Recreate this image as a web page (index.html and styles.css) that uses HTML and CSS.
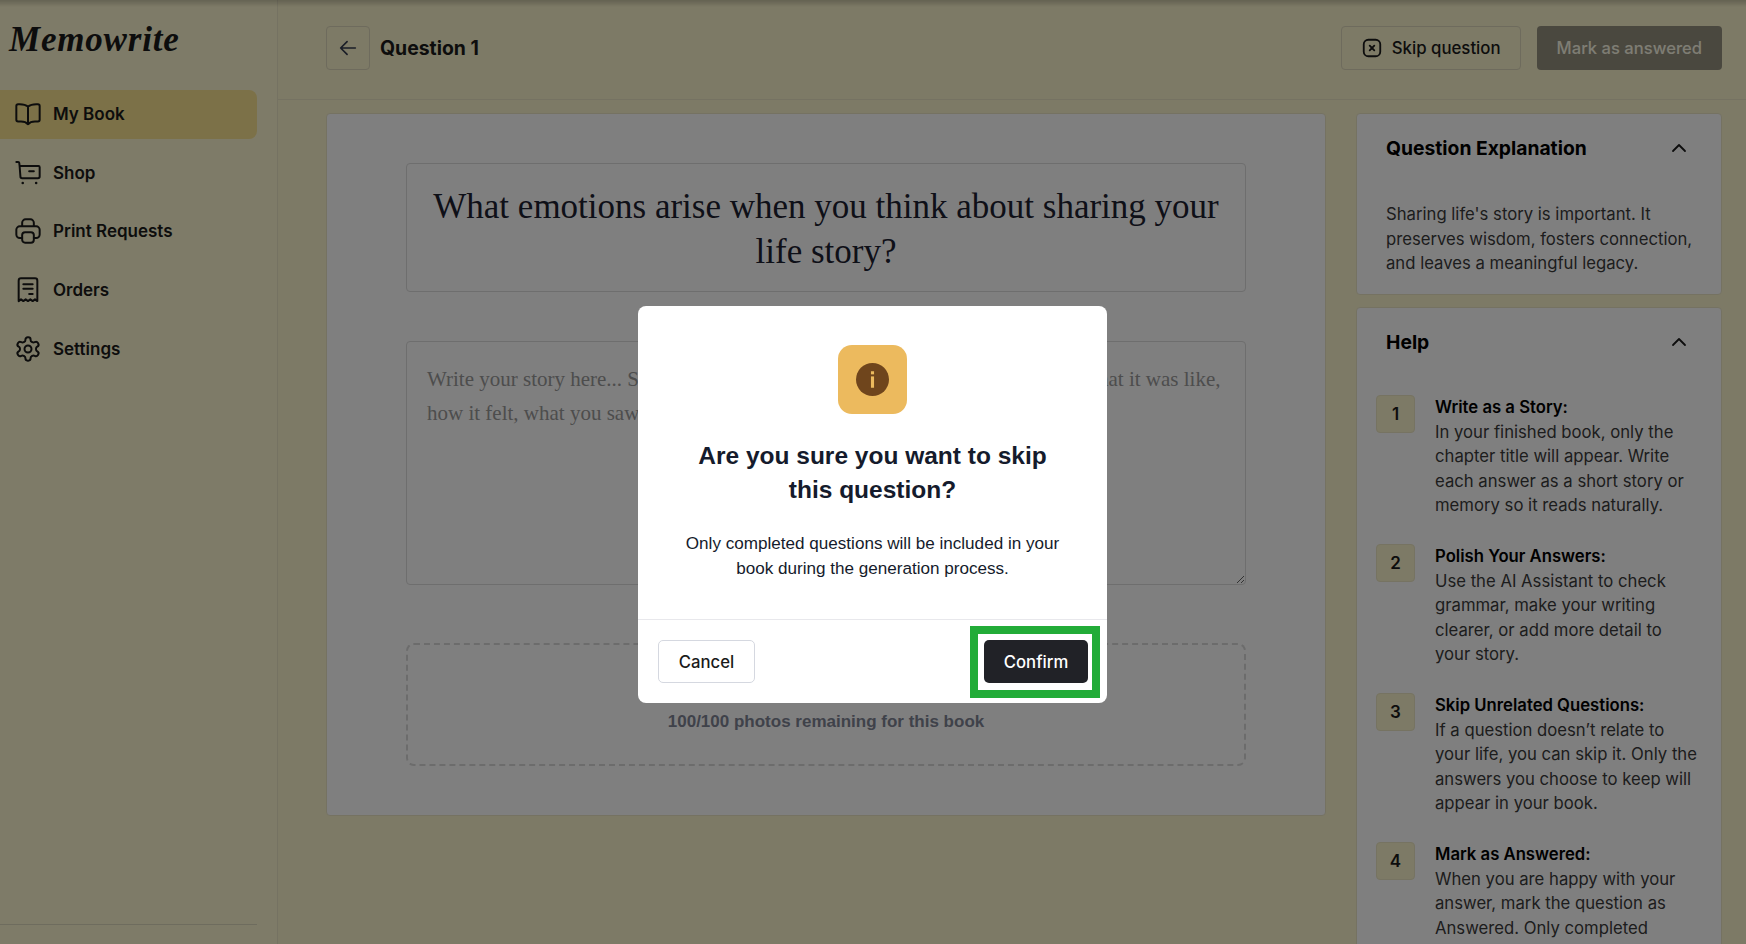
FILE: index.html
```html
<!DOCTYPE html>
<html lang="en">
<head>
	<meta charset="utf-8" />
	<title>Memowrite</title>
	<link rel="stylesheet" href="styles.css">
</head>
<body>
<div class="app">
	<div class="sidebar">
		<div class="logo">Memowrite</div>
		<a class="nav-item active">
			<svg class="nav-icon" viewBox="0 0 24 24"><path d="M12 5.600C10.400 4.300 8.200 3.600 5 3.600H3.500A1.500 1.500 0 0 0 2 5.100V17a1.500 1.500 0 0 0 1.500 1.500H6c2.600 0 4.600.7 6 2.300 1.400-1.600 3.400-2.300 6-2.300h2.500A1.500 1.500 0 0 0 22 17V5.100a1.500 1.500 0 0 0-1.500-1.500H19c-3.200 0-5.400.7-7 2zM12 5.600v15.200"/></svg>
			My Book
		</a>
		<a class="nav-item">
			<svg class="nav-icon" viewBox="0 0 24 24"><path d="M2 2.500h1.500a1 1 0 0 1 1 .9l.3 2.600M4.800 6h16.200a1 1 0 0 1 1 1v8a1.500 1.500 0 0 1-1.500 1.500H7a1.500 1.500 0 0 1-1.500-1.500zM13 10.500h4"/><circle class="dot" cx="7.500" cy="20.500" r="1.100"/><circle class="dot" cx="19" cy="20.500" r="1.100"/></svg>
			Shop
		</a>
		<a class="nav-item">
			<svg class="nav-icon" viewBox="0 0 24 24"><path d="M7 8V5a3 3 0 0 1 3-3h4a3 3 0 0 1 3 3v3M7 18H5a3 3 0 0 1-3-3v-4a3 3 0 0 1 3-3h14a3 3 0 0 1 3 3v4a3 3 0 0 1-3 3h-2"/><rect x="7" y="13" width="10" height="9" rx="2.500"/></svg>
			Print Requests
		</a>
		<a class="nav-item">
			<svg class="nav-icon" viewBox="0 0 24 24"><path d="M4 21.500V4a2 2 0 0 1 2-2h12a2 2 0 0 1 2 2v17.500l-2-1.500-2 1.500-2-1.500-2 1.500-2-1.500-2 1.500-2-1.500zM8 7h8M8 11h8M13 15.500h3"/></svg>
			Orders
		</a>
		<a class="nav-item">
			<svg class="nav-icon" viewBox="0 0 24 24"><path d="M12.220 2h-.44a2 2 0 0 0-2 2v.18a2 2 0 0 1-1 1.730l-.43.25a2 2 0 0 1-2 0l-.15-.08a2 2 0 0 0-2.730.73l-.22.38a2 2 0 0 0 .73 2.730l.15.1a2 2 0 0 1 1 1.720v.51a2 2 0 0 1-1 1.740l-.15.09a2 2 0 0 0-.73 2.730l.22.38a2 2 0 0 0 2.730.73l.15-.08a2 2 0 0 1 2 0l.43.25a2 2 0 0 1 1 1.730V20a2 2 0 0 0 2 2h.44a2 2 0 0 0 2-2v-.18a2 2 0 0 1 1-1.730l.43-.25a2 2 0 0 1 2 0l.15.08a2 2 0 0 0 2.730-.73l.22-.39a2 2 0 0 0-.73-2.730l-.15-.08a2 2 0 0 1-1-1.740v-.5a2 2 0 0 1 1-1.740l.15-.09a2 2 0 0 0 .73-2.730l-.22-.38a2 2 0 0 0-2.730-.73l-.15.08a2 2 0 0 1-2 0l-.43-.25a2 2 0 0 1-1-1.730V4a2 2 0 0 0-2-2z"/><circle cx="12" cy="12" r="3"/></svg>
			Settings
		</a>
		<div class="sidebar-foot"></div>
	</div>

	<div class="main">
		<div class="topbar">
			<button class="btn-back">
				<svg class="back-icon" viewBox="0 0 24 24"><path d="M20 12H4M11 5l-7 7 7 7"/></svg>
			</button>
			<h1 class="page-title">Question 1</h1>
			<button class="btn-skip">
				<svg class="skip-icon" viewBox="0 0 24 24"><rect x="3" y="3" width="18" height="18" rx="5"/><path d="M9.500 9.500l5 5M14.500 9.500l-5 5"/></svg>
				Skip question
			</button>
			<button class="btn-mark">Mark as answered</button>
		</div>

		<div class="content">
			<div class="editor">
				<div class="question-box">What emotions arise when you think about sharing your life story?</div>
				<textarea class="story" placeholder="Write your story here... Share a vivid moment from your life and tell us again what it was like,&#10;how it felt, what you saw, who was with you and why it matters."></textarea>
				<div class="dropzone">
					<span class="photos-left">100/100 photos remaining for this book</span>
				</div>
			</div>

			<div class="aside">
				<div class="panel panel-explain">
					<div class="panel-head">
						<h2>Question Explanation</h2>
						<svg class="chevron" viewBox="0 0 16 10"><path d="M2 8l6-6 6 6"/></svg>
					</div>
					<p class="panel-text">Sharing life's story is important. It preserves wisdom, fosters connection, and leaves a meaningful legacy.</p>
				</div>
				<div class="panel panel-help">
					<div class="panel-head">
						<h2>Help</h2>
						<svg class="chevron" viewBox="0 0 16 10"><path d="M2 8l6-6 6 6"/></svg>
					</div>
					<div class="help-item">
						<div class="help-num">1</div>
						<div class="help-text"><b>Write as a Story:</b><br />In your finished book, only the chapter title will appear. Write each answer as a short story or memory so it reads naturally.</div>
					</div>
					<div class="help-item">
						<div class="help-num">2</div>
						<div class="help-text"><b>Polish Your Answers:</b><br />Use the AI Assistant to check grammar, make your writing clearer, or add more detail to your story.</div>
					</div>
					<div class="help-item">
						<div class="help-num">3</div>
						<div class="help-text"><b>Skip Unrelated Questions:</b><br />If a question doesn’t relate to your life, you can skip it. Only the answers you choose to keep will appear in your book.</div>
					</div>
					<div class="help-item">
						<div class="help-num">4</div>
						<div class="help-text"><b>Mark as Answered:</b><br />When you are happy with your answer, mark the question as Answered. Only completed</div>
					</div>
				</div>
			</div>
		</div>
	</div>
</div>

<div class="overlay">
	<div class="modal">
		<div class="modal-body">
			<div class="modal-icon">
				<svg viewBox="0 0 32 32"><circle class="info-disc" cx="16" cy="16" r="16"/><rect class="info-mark" x="14.500" y="8" width="3" height="3"/><rect class="info-mark" x="14.500" y="13" width="3" height="11"/></svg>
			</div>
			<h3 class="modal-title">Are you sure you want to skip this question?</h3>
			<p class="modal-text">Only completed questions will be included in your book during the generation process.</p>
		</div>
		<div class="modal-foot">
			<button class="btn-cancel">Cancel</button>
			<div class="highlight"><button class="btn-confirm">Confirm</button></div>
		</div>
	</div>
</div>
</body>
</html>
```

FILE: styles.css
```css
* {
	box-sizing: border-box;
}
html, body {
	height: 100%;
}
body {
	margin: 0;
	overflow: hidden;
	background-color: #faf4cc;
	color: #1a1a1a;
	font-family: Inter, "Liberation Sans", sans-serif;
}
button {
	font-family: inherit;
}
.app {
	display: flex;
	height: 944px;
}

/* sidebar */
.sidebar {
	position: relative;
	flex: 0 0 278px;
	background-color: #fdf7d0;
	border-right: 1px solid #ebe5c5;
}
.logo {
	height: 89.500px;
	padding: 20px 0 0 9px;
	font-family: "Liberation Serif", serif;
	font-style: italic;
	font-weight: bold;
	font-size: 35px;
	letter-spacing: 0.8px;
}
.nav-item {
	display: flex;
	align-items: center;
	gap: 11px;
	width: 257px;
	height: 49px;
	margin-bottom: 9.700px;
	padding-left: 14px;
	border-radius: 0 8px 8px 0;
	font-size: 17px;
	font-weight: 600;
}
.nav-item.active {
	background-color: #f8e290;
}
.nav-icon {
	width: 28px;
	height: 28px;
	fill: none;
	stroke: #1a1a1a;
	stroke-width: 1.700;
	stroke-linecap: round;
	stroke-linejoin: round;
}
.nav-icon .dot {
	fill: #1a1a1a;
	stroke: none;
}
.sidebar-foot {
	position: absolute;
	left: 0;
	bottom: 19px;
	width: 257px;
	border-top: 1px solid #dcd8bc;
}

/* top bar */
.main {
	flex: 1;
	min-width: 0;
}
.topbar {
	display: flex;
	align-items: center;
	height: 100px;
	padding: 0 24px 4px 48px;
	border-bottom: 1px solid #ebe5c5;
}
.btn-back {
	width: 44px;
	height: 44px;
	padding: 10px;
	background: none;
	border: 1px solid #ddd7ba;
	border-radius: 4px;
}
.back-icon {
	display: block;
	fill: none;
	stroke: #333a4d;
	stroke-width: 1.800;
	stroke-linecap: round;
	stroke-linejoin: round;
}
.page-title {
	margin: 0 auto 0 10px;
	font-size: 19.400px;
	font-weight: 650;
}
.btn-skip {
	display: flex;
	align-items: center;
	gap: 9px;
	height: 44px;
	padding: 0 19px;
	background: none;
	border: 1px solid #ddd7ba;
	border-radius: 4px;
	color: #1a1a1a;
	font-size: 16.800px;
	font-weight: 500;
}
.skip-icon {
	width: 22px;
	height: 22px;
	fill: none;
	stroke: #1a1a1a;
	stroke-width: 2;
	stroke-linecap: round;
}
.btn-mark {
	height: 44px;
	margin-left: 16px;
	padding: 0 20px;
	background-color: #95907f;
	border: 0;
	border-radius: 4px;
	color: #fdfbe8;
	font-size: 16.600px;
	font-weight: 500;
}

/* content */
.content {
	display: flex;
	align-items: flex-start;
	gap: 30px;
	padding: 13px 24px 0 48px;
}
.editor {
	flex: 0 0 1000px;
	height: 703px;
	padding: 49px 79px 0;
	background-color: #fff;
	border: 1px solid #ebe5c5;
	border-radius: 4px;
}
.question-box {
	height: 129px;
	padding: 21px 20px 0;
	border: 1px solid #dcdcdc;
	border-radius: 4px;
	font-family: "Liberation Serif", serif;
	font-size: 35px;
	line-height: 44.500px;
	text-align: center;
	color: #1c2130;
}
.story {
	display: block;
	width: 100%;
	height: 244px;
	margin-top: 49px;
	padding: 20px 20px;
	background: none;
	border: 1px solid #dcdcdc;
	border-radius: 4px;
	font-family: "Liberation Serif", serif;
	font-size: 21px;
	line-height: 34px;
	white-space: pre;
}
.story::placeholder {
	color: #9a9a9a;
}
.dropzone {
	display: flex;
	align-items: flex-end;
	justify-content: center;
	height: 123px;
	margin-top: 58px;
	padding-bottom: 32px;
	border: 2px dashed #d8d8d8;
	border-radius: 8px;
}
.photos-left {
	font-family: "Liberation Sans", sans-serif;
	font-size: 17px;
	font-weight: bold;
	color: #7e8494;
}

/* right column */
.aside {
	flex: 0 0 366px;
}
.panel {
	margin-bottom: 12px;
	padding: 0 22px 0 29px;
	background-color: #fff;
	border: 1px solid #ebe5c5;
	border-radius: 4px;
}
.panel-explain {
	height: 182px;
}
.panel-head {
	display: flex;
	align-items: center;
	justify-content: space-between;
	height: 68px;
	padding: 0 12px 0 0;
}
.panel-head h2 {
	margin: 0;
	font-size: 19.300px;
	font-weight: 650;
	color: #000;
}
.chevron {
	width: 16px;
	height: 10px;
	fill: none;
	stroke: #1a1a1a;
	stroke-width: 1.800;
	stroke-linecap: round;
	stroke-linejoin: round;
}
.panel-text {
	margin: 20px 0 0;
	font-size: 16.700px;
	line-height: 24.500px;
	color: #3a3a3a;
}
.panel-help {
	padding-left: 19px;
	padding-right: 22px;
}
.panel-help .panel-head {
	padding: 0 12px 0 10px;
}
.help-item {
	display: flex;
	gap: 20px;
	margin-top: 19px;
	margin-bottom: 26.500px;
	font-size: 16.700px;
	line-height: 24.500px;
	color: #3a3a3a;
}
.help-item + .help-item {
	margin-top: 0;
}
.help-item b {
	font-weight: 600;
	color: #000;
}
.help-num {
	flex: 0 0 39px;
	height: 38px;
	background-color: #faf4cc;
	border: 1px solid #ece6c4;
	border-radius: 4px;
	font-weight: 600;
	font-size: 17px;
	line-height: 36px;
	text-align: center;
	color: #1a1a1a;
}

/* skip dialog */
.overlay {
	position: fixed;
	top: 0;
	left: 0;
	right: 0;
	bottom: 0;
	background: linear-gradient(rgba(0, 0, 0, 0.6), rgba(0, 0, 0, 0.5) 7px);
}
.modal {
	position: absolute;
	left: 638px;
	top: 306px;
	width: 469px;
	height: 397px;
	background-color: #fff;
	border-radius: 8px;
	font-family: "Liberation Sans", sans-serif;
	color: #151b2c;
}
.modal-body {
	height: 314px;
	padding: 39px 42px 0;
	border-bottom: 1px solid #e8e8ec;
	text-align: center;
}
.modal-icon {
	display: flex;
	align-items: center;
	justify-content: center;
	width: 69px;
	height: 69px;
	margin: 0 auto;
	background-color: #ecba5e;
	border-radius: 14px;
}
.modal-icon svg {
	width: 33px;
	height: 33px;
}
.info-disc {
	fill: #6f451c;
}
.info-mark {
	fill: #ecba5e;
}
.modal-title {
	margin: 25px 0 0;
	font-size: 24.500px;
	line-height: 34px;
}
.modal-text {
	margin: 25px 0 0;
	font-size: 17.100px;
	line-height: 24.500px;
}
.modal-foot {
	display: flex;
	align-items: flex-start;
	justify-content: space-between;
	padding: 6px 7px 0 20px;
	font-family: Inter, sans-serif;
}
.btn-cancel {
	width: 97px;
	height: 43px;
	margin-top: 14px;
	background-color: #fff;
	border: 1px solid #d5d8e0;
	border-radius: 5px;
	color: #1a1a1a;
	font-size: 16.700px;
	font-weight: 500;
}
.highlight {
	padding: 6px 4px 7px 6px;
	border: 8px solid #22ac38;
}
.btn-confirm {
	display: block;
	width: 104px;
	height: 43px;
	background-color: #212227;
	border: 0;
	border-radius: 5px;
	color: #fff;
	font-size: 16.700px;
	font-weight: 500;
}
```
